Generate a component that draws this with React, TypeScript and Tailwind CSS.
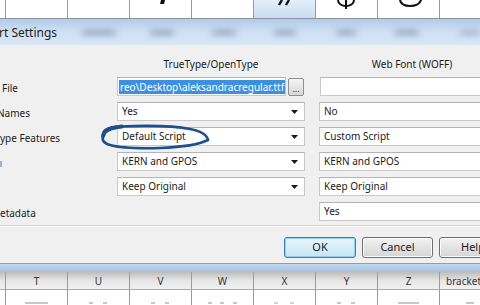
import React from 'react';

const topCells = ['', '', 'dot', '', 'quote', 'phi', 'ring', ''];
const bottomCells = ['T', 'U', 'V', 'W', 'X', 'Y', 'Z', 'bracket'];

function TopGlyph({ kind }: { kind: string }) {
  if (kind === 'dot')
    return (
      <svg width="62" height="18" className="absolute left-0 top-0">
        <path d="M31 0 L35 0 L34 4 L30 4 Z" fill="#111" />
      </svg>
    );
  if (kind === 'quote')
    return (
      <svg width="62" height="18" className="absolute left-0 top-0">
        <path d="M28 0 L25 5 M35 0 L32 5" stroke="#111" strokeWidth="2.4" />
      </svg>
    );
  if (kind === 'phi')
    return (
      <svg width="62" height="18" className="absolute left-0 top-0">
        <path d="M22 0 C22 4 26 6 30 6 C34 6 38 4 38 0" stroke="#111" strokeWidth="2" fill="none" />
        <path d="M30 0 L30 9" stroke="#111" strokeWidth="2" />
      </svg>
    );
  if (kind === 'ring')
    return (
      <svg width="62" height="18" className="absolute left-0 top-0">
        <path d="M22 0 C23 5 27 6 32 6 C37 6 42 4 43 0" stroke="#111" strokeWidth="2.2" fill="none" />
      </svg>
    );
  return null;
}

function Field({ value, arrow = true }: { value: string; arrow?: boolean }) {
  return (
    <div className="h-[19px] flex items-center bg-white border border-[#c9c9c9] border-t-[#b3b3b3] pl-[4px] pr-[4px]">
      <span className="flex-1 truncate">{value}</span>
      {arrow && (
        <svg width="7" height="4" className="mr-[2px]">
          <path d="M0 0 L7 0 L3.5 4 Z" fill="#1a1a1a" />
        </svg>
      )}
    </div>
  );
}

function Row({ label, left, right, labelClass = '' }: { label: React.ReactNode; left: React.ReactNode; right: React.ReactNode; labelClass?: string }) {
  return (
    <div className="flex items-center h-[19px]">
      <div className={`w-[117px] shrink-0 overflow-hidden whitespace-nowrap pt-[3px] ${labelClass}`}>{label}</div>
      <div className="w-[188px] shrink-0">{left}</div>
      <div className="w-[186px] shrink-0 ml-[14px]">{right}</div>
    </div>
  );
}

export default function App() {
  return (
    <div className="relative w-[480px] h-[305px] overflow-hidden bg-white text-[10px] text-[#1b1b1b] font-['Noto_Sans',sans-serif]">
      {/* glyph grid, top */}
      <div className="flex h-[19px] border-b border-[#8a94a0]">
        <div className="w-[6px] shrink-0 border-r border-[#9a9a9a]" />
        {topCells.map((c, i) => (
          <div
            key={i}
            className={`relative w-[62px] shrink-0 border-r border-[#9a9a9a] ${i === 4 ? 'bg-gradient-to-b from-[#e4eefa] to-[#c9dcf2]' : 'bg-white'}`}
          >
            <TopGlyph kind={c} />
          </div>
        ))}
      </div>

      {/* dialog title bar */}
      <div className="relative h-[26px] bg-gradient-to-b from-[#b2cbe8] via-[#cfe0f3] to-[#d9e7f5] flex items-center overflow-hidden">
        <span className="text-[12px] leading-none text-[#1e1e1e] -ml-[1px] pt-[1px]">rt Settings</span>
        <div className="absolute left-[82px] top-[11px] w-[34px] h-[5px] rounded-full bg-[#8ea3ba] blur-[3px]" />
        <div className="absolute left-[150px] top-[11px] w-[24px] h-[5px] rounded-full bg-[#8ea3ba] blur-[3px]" />
        <div className="absolute left-[212px] top-[11px] w-[24px] h-[5px] rounded-full bg-[#8ea3ba] blur-[3px]" />
        <div className="absolute left-[274px] top-[11px] w-[22px] h-[5px] rounded-full bg-[#8ea3ba] blur-[3px]" />
        <div className="absolute left-[336px] top-[11px] w-[20px] h-[5px] rounded-full bg-[#8ea3ba] blur-[3px]" />
        <div className="absolute left-[395px] top-[11px] w-[24px] h-[5px] rounded-full bg-[#8ea3ba] blur-[3px]" />
        <div className="absolute left-[460px] top-[11px] w-[20px] h-[5px] rounded-full bg-[#9fb3c9] blur-[3px]" />
      </div>

      {/* dialog body */}
      <div className="bg-[#f0f0f0] pt-[12px] pb-[5px]">
        <div className="flex flex-col gap-[6px]">
          <div className="flex h-[14px] items-center">
            <div className="w-[117px] shrink-0" />
            <div className="w-[188px] shrink-0 text-center">TrueType/OpenType</div>
            <div className="w-[186px] shrink-0 ml-[14px] text-center">Web Font (WOFF)</div>
          </div>

          <div className="flex items-center h-[19px]">
            <div className="w-[117px] shrink-0 pl-[2px] pt-[3px]">File</div>
            <div className="w-[169px] shrink-0 h-[19px] bg-white border border-[#c9c9c9] border-t-[#b3b3b3] flex items-center overflow-hidden pl-[1px]">
              <span className="bg-[#3d8fe0] text-white whitespace-nowrap leading-[14px] px-[1px]">reo\Desktop\aleksandracregular.ttf</span>
            </div>
            <div className="w-[16px] h-[18px] shrink-0 ml-[2px] rounded-[2px] border border-[#8e8f8f] bg-gradient-to-b from-[#f4f4f4] to-[#d7d7d7] flex items-end justify-center text-[9px] leading-[12px]">...</div>
            <div className="w-[186px] shrink-0 ml-[16px]">
              <div className="h-[19px] bg-white border border-[#c9c9c9] border-t-[#b3b3b3]" />
            </div>
          </div>

          <Row label={<span className="-ml-[3px] inline-block">Names</span>} left={<Field value="Yes" />} right={<Field value="No" />} />
          <Row label="ype Features" left={<Field value="Default Script" />} right={<Field value="Custom Script" />} />
          <Row label={<span className="inline-block w-[2px] h-[6px] bg-[#9db4cc] -ml-[0px]" />} left={<Field value="KERN and GPOS" />} right={<Field value="KERN and GPOS" />} />
          <Row label="" left={<Field value="Keep Original" />} right={<Field value="Keep Original" />} />
          <Row label="etadata" left={<div />} right={<Field value="Yes" arrow={false} />} />
        </div>

        <div className="mt-[4px] h-[2px] border-t border-[#d5d5d5] border-b border-b-white" />

        <div className="mt-[10px] ml-[284px] flex gap-[6px] text-[11px]">
          <div className="w-[72px] h-[21px] shrink-0 rounded-[3px] border border-[#3c7fb1] bg-gradient-to-b from-[#eaf6fd] to-[#c4e5f6] shadow-[inset_0_0_0_1px_#8fd0ef] flex items-center justify-center">OK</div>
          <div className="w-[71px] h-[21px] shrink-0 rounded-[3px] border border-[#707070] bg-gradient-to-b from-[#f2f2f2] to-[#d5d5d5] shadow-[inset_0_0_0_1px_#fbfbfb] flex items-center justify-center">Cancel</div>
          <div className="w-[72px] h-[21px] shrink-0 rounded-[3px] border border-[#707070] bg-gradient-to-b from-[#f2f2f2] to-[#d5d5d5] shadow-[inset_0_0_0_1px_#fbfbfb] flex items-center pl-[21px]">Help</div>
        </div>
      </div>

      {/* dialog bottom frame */}
      <div className="h-[9px] border-t border-[#7f9fc6] bg-gradient-to-b from-[#c3d7ee] to-[#a9c1dc]" />

      {/* glyph grid, bottom */}
      <div className="flex h-[18px] bg-gradient-to-b from-[#bdbdbd] via-[#e6e6e6] to-[#f1f1f1] border-b border-[#a8a8a8]">
        <div className="w-[6px] shrink-0 border-r border-[#9a9a9a]" />
        {bottomCells.map((c) => (
          <div
            key={c}
            className={`w-[62px] shrink-0 border-r border-[#9a9a9a] flex items-center pt-[2px] text-[10px] text-[#333] ${c === 'bracket' ? 'pl-[6px]' : 'justify-center'}`}
          >
            {c}
          </div>
        ))}
      </div>
      <div className="flex h-[15px]">
        <div className="w-[6px] shrink-0 border-r border-[#9a9a9a]" />
        {bottomCells.map((c) => (
          <div key={c} className="relative w-[62px] shrink-0 border-r border-[#9a9a9a] bg-white">
            <svg width="62" height="15" className="absolute left-0 top-0">
              {c === 'T' && <path d="M19 13 L42 13" stroke="#b5b5b5" strokeWidth="1.5" />}
              {(c === 'U' || c === 'V' || c === 'Y') && (
                <path d="M21 13 L25 13 M35 13 L39 13" stroke="#b5b5b5" strokeWidth="1.5" />
              )}
              {c === 'W' && <path d="M16 13 L20 13 M28 13 L32 13 M41 13 L45 13" stroke="#b5b5b5" strokeWidth="1.5" />}
              {c === 'X' && <path d="M20 13 L24 13 M36 13 L40 13" stroke="#c5c5c5" strokeWidth="1.5" />}
              {c === 'Z' && <path d="M20 13 L41 13" stroke="#b5b5b5" strokeWidth="1.5" />}
              {c === 'bracket' && <path d="M26 13 L34 13" stroke="#b5b5b5" strokeWidth="1.5" />}
            </svg>
          </div>
        ))}
      </div>

      {/* pen mark around "Default Script" */}
      <svg width="480" height="305" className="absolute left-0 top-0 pointer-events-none">
        <path
          d="M104 135 C102 130 108 127 120 126.5 C145 125.5 175 126 190 129 C200 131 207 135 208 140 C200 144 185 147 160 148 C140 148.5 120 148 110 145 C103 143 101 139 104 135 Z"
          stroke="#1e4f8d"
          strokeWidth="2.6"
          fill="none"
        />
        <path d="M103 136 C104 130 110 128 122 126.5" stroke="#1e4f8d" strokeWidth="4" fill="none" strokeLinecap="round" />
      </svg>
    </div>
  );
}
